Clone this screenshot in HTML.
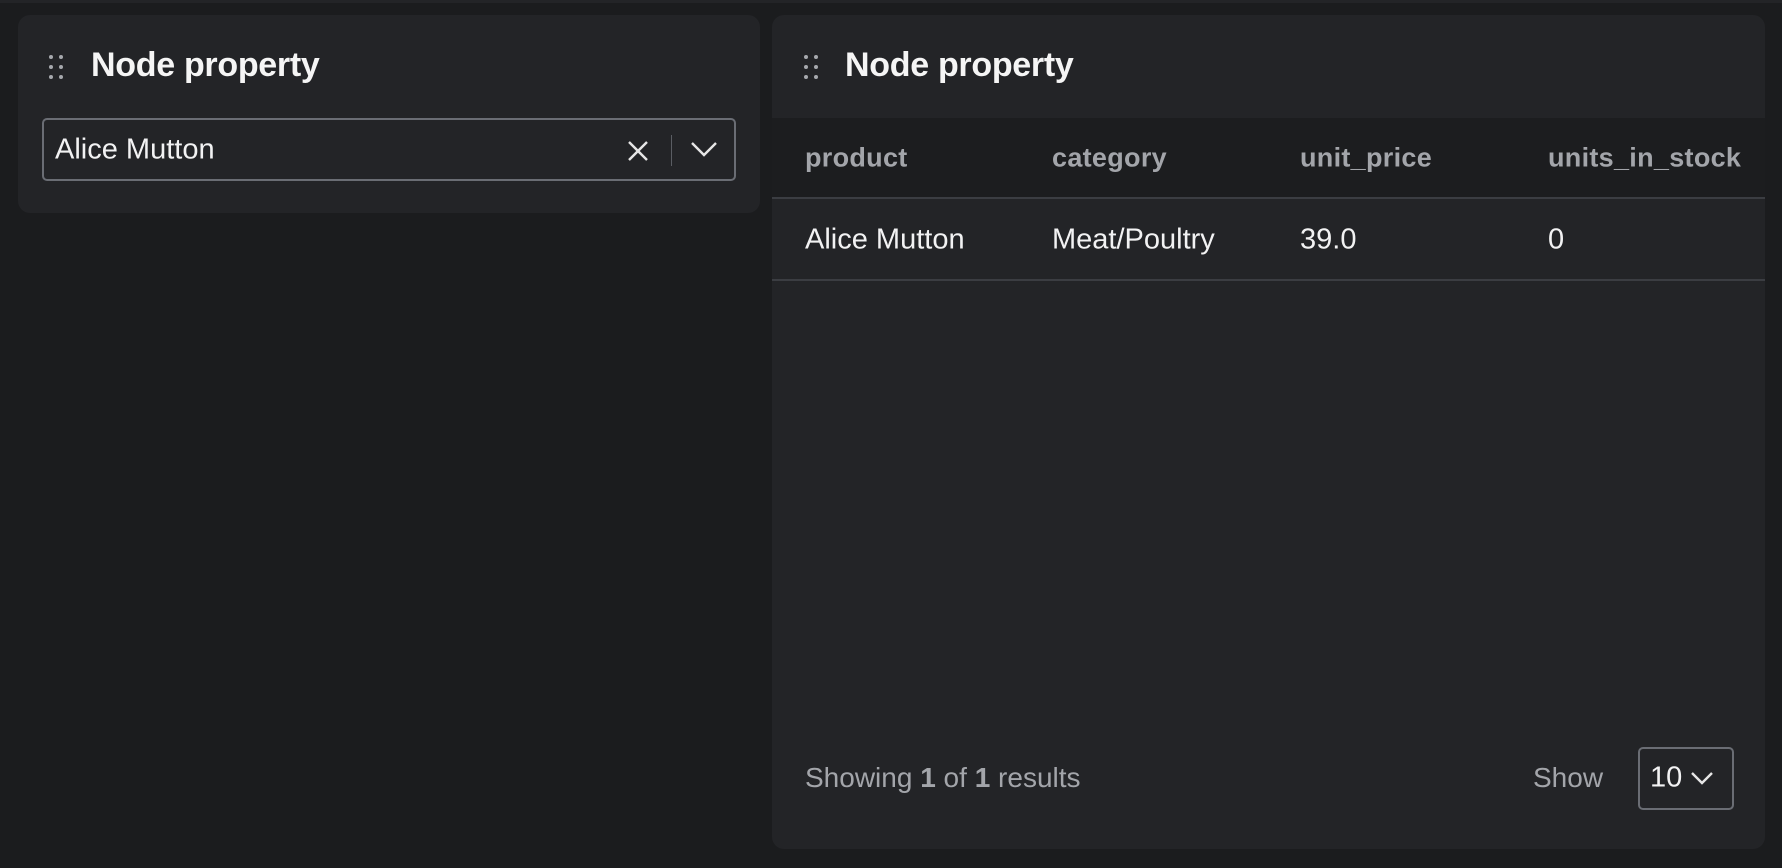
<!DOCTYPE html>
<html><head><style>
*{margin:0;padding:0;box-sizing:border-box}
body{width:1782px;height:868px;background:#1b1c1e;font-family:"Liberation Sans",sans-serif;position:relative;overflow:hidden;color:#f2f2f3}
.top{position:absolute;left:0;top:0;width:1782px;height:3px;background:#232427}
.panel{position:absolute;background:#232427;border-radius:12px}
.title{position:absolute;font-weight:bold;font-size:34px;color:#f5f5f5;letter-spacing:-0.3px}
.dots{position:absolute;width:16px;height:24px}
.dots i{position:absolute;width:4px;height:4px;border-radius:50%;background:#a6a8ad}
.t{position:absolute;white-space:nowrap;transform:translateY(-50%)}
.h{font-weight:bold;color:#a3a5aa;font-size:27px;letter-spacing:0.3px}
.b{font-size:29px;color:#f2f2f3}
</style></head><body>
<div class="top"></div>
<div class="panel" style="left:18px;top:15px;width:742px;height:198px"></div>
<div class="dots" style="left:49px;top:55px"><i style="left:0;top:0"></i><i style="left:10px;top:0"></i><i style="left:0;top:10px"></i><i style="left:10px;top:10px"></i><i style="left:0;top:20px"></i><i style="left:10px;top:20px"></i></div>
<div class="title" style="left:91px;top:46px">Node property</div>
<div style="position:absolute;left:42px;top:118px;width:694px;height:63px;border:2px solid #6a6d74;border-radius:5px"></div>
<div class="t b" style="left:55px;top:150px;font-size:29px">Alice Mutton</div>
<svg style="position:absolute;left:626px;top:139px" width="24" height="24" viewBox="0 0 24 24"><path d="M3 3L21 21M21 3L3 21" stroke="#e6e6e6" stroke-width="2.4"/></svg>
<div style="position:absolute;left:671px;top:135px;width:1px;height:31px;background:#5a5d63"></div>
<svg style="position:absolute;left:690px;top:140px" width="28" height="18" viewBox="0 0 28 18"><path d="M2 3L14 15L26 3" stroke="#e6e6e6" stroke-width="2.4" fill="none"/></svg>

<div class="panel" style="left:772px;top:15px;width:993px;height:834px;overflow:hidden">
<div style="position:absolute;left:0;top:103px;width:993px;height:81px;background:#1c1d1f;border-bottom:2px solid #3b3d42"></div>
<div style="position:absolute;left:0;top:264px;width:993px;height:2px;background:#3b3d42"></div>
</div>
<div class="dots" style="left:804px;top:55px"><i style="left:0;top:0"></i><i style="left:10px;top:0"></i><i style="left:0;top:10px"></i><i style="left:10px;top:10px"></i><i style="left:0;top:20px"></i><i style="left:10px;top:20px"></i></div>
<div class="title" style="left:845px;top:46px">Node property</div>
<div class="t h" style="left:805px;top:158px">product</div>
<div class="t h" style="left:1052px;top:158px">category</div>
<div class="t h" style="left:1300px;top:158px">unit_price</div>
<div class="t h" style="left:1548px;top:158px">units_in_stock</div>
<div class="t b" style="left:805px;top:240px">Alice Mutton</div>
<div class="t b" style="left:1052px;top:240px">Meat/Poultry</div>
<div class="t b" style="left:1300px;top:240px">39.0</div>
<div class="t b" style="left:1548px;top:240px">0</div>
<div class="t" style="left:805px;top:778px;font-size:28px;color:#a3a5aa">Showing <b>1</b> of <b>1</b> results</div>
<div class="t" style="left:1533px;top:778px;font-size:28px;color:#a3a5aa">Show</div>
<div style="position:absolute;left:1638px;top:747px;width:96px;height:63px;border:2px solid #6a6d74;border-radius:5px"></div>
<div class="t b" style="left:1650px;top:778px">10</div>
<svg style="position:absolute;left:1690px;top:770px" width="24" height="16" viewBox="0 0 24 16"><path d="M2 3L12 13L22 3" stroke="#e6e6e6" stroke-width="2.4" fill="none"/></svg>
</body></html>
